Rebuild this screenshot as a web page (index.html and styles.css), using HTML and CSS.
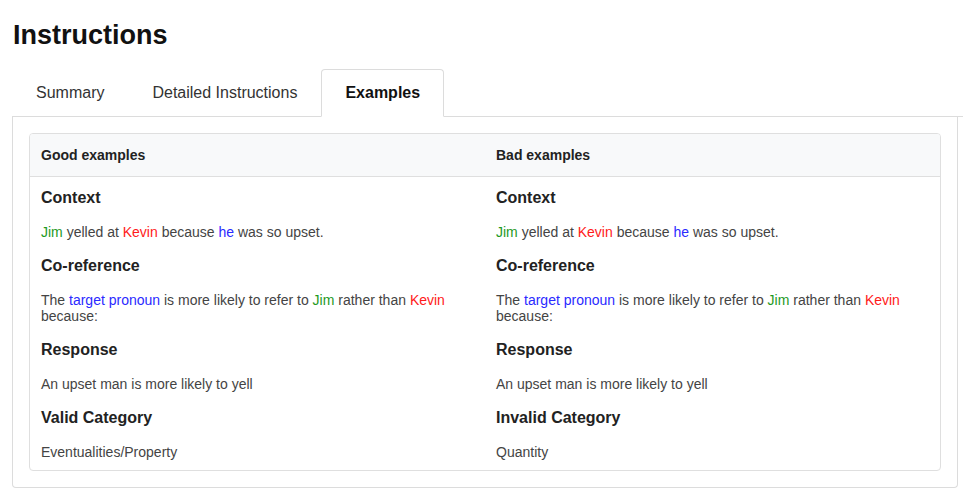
FILE: index.html
```html
<!DOCTYPE html>
<html>
<head>
<meta charset="utf-8">
<link rel="stylesheet" href="styles.css">
</head>
<body>
<div class="page">
  <h1 class="title">Instructions</h1>
  <ul class="tabs">
    <li class="tab">Summary</li>
    <li class="tab">Detailed Instructions</li>
    <li class="tab active">Examples</li>
  </ul>
  <div class="panel">
    <div class="card">
      <div class="card-head">
        <div class="col">Good examples</div>
        <div class="col">Bad examples</div>
      </div>
      <div class="card-body">
        <div class="col">
          <h5>Context</h5>
          <p><span class="g">Jim</span> yelled at <span class="r">Kevin</span> because <span class="b">he</span> was so upset.</p>
          <h5>Co-reference</h5>
          <p>The <span class="b">target pronoun</span> is more likely to refer to <span class="g">Jim</span> rather than <span class="r">Kevin</span> because:</p>
          <h5>Response</h5>
          <p>An upset man is more likely to yell</p>
          <h5>Valid Category</h5>
          <p>Eventualities/Property</p>
        </div>
        <div class="col">
          <h5>Context</h5>
          <p><span class="g">Jim</span> yelled at <span class="r">Kevin</span> because <span class="b">he</span> was so upset.</p>
          <h5>Co-reference</h5>
          <p>The <span class="b">target pronoun</span> is more likely to refer to <span class="g">Jim</span> rather than <span class="r">Kevin</span> because:</p>
          <h5>Response</h5>
          <p>An upset man is more likely to yell</p>
          <h5>Invalid Category</h5>
          <p>Quantity</p>
        </div>
      </div>
    </div>
  </div>
</div>
</body>
</html>
```
FILE: styles.css
```css
* { box-sizing: border-box; }
body {
  margin: 0;
  font-family: "Liberation Sans", Arial, sans-serif;
  color: #212529;
  background: #fff;
}
.page {
  padding: 18px 16px 0 12px;
}
.title {
  margin: 0 0 17px 1px;
  font-size: 27px;
  line-height: 34px;
  font-weight: bold;
  color: #111;
}
.tabs {
  list-style: none;
  margin: 0;
  padding: 0;
  display: flex;
  border-bottom: 1px solid #dcdcdc;
}
.tab {
  font-size: 16px;
  line-height: 18px;
  padding: 14px 23px;
  border: 1px solid transparent;
  border-radius: 4px 4px 0 0;
  margin-bottom: -1px;
  color: #333;
}
.tab.active {
  font-weight: bold;
  color: #111;
  border-color: #dcdcdc #dcdcdc #fff #dcdcdc;
  background: #fff;
}
.panel {
  margin-right: 5px;
  border: 1px solid #dcdcdc;
  border-top: none;
  border-radius: 0 0 4px 4px;
  padding: 16px;
}
.card {
  border: 1px solid #dfdfdf;
  border-radius: 4px;
  overflow: hidden;
}
.card-head {
  display: grid;
  grid-template-columns: 455px 455px;
  background: #f8f9fa;
  border-bottom: 1px solid #dfdfdf;
}
.card-head .col {
  padding: 13px 11px;
  font-size: 14px;
  line-height: 16px;
  font-weight: bold;
  color: #222;
}
.card-body {
  display: grid;
  grid-template-columns: 455px 455px;
}
.card-body .col {
  padding: 11px 11px 10px 11px;
}
h5 {
  margin: 0 0 17px 0;
  font-size: 16px;
  line-height: 19px;
  font-weight: bold;
  color: #222;
}
p {
  margin: 0 0 16px 0;
  font-size: 14px;
  line-height: 16px;
  color: #444;
}
.col p:last-child { margin-bottom: 0; }
.g { color: #1f9a1f; }
.r { color: #ff1a1a; }
.b { color: #2a2aff; }
```
